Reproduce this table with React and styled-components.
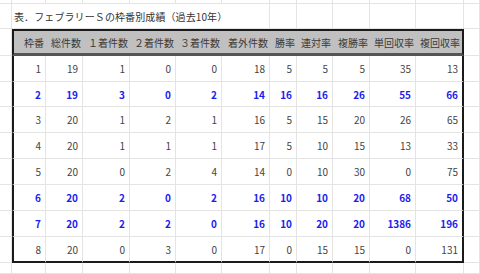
import React from 'react';
import styled, { createGlobalStyle } from 'styled-components';

const GlobalStyle = createGlobalStyle`
  body {
    margin: 0;
    background: #fff;
    font-family: "Noto Sans CJK JP", "Liberation Sans", sans-serif;
  }
`;

const COLS = [12, 34, 37, 47, 46, 46, 48, 27, 36, 37, 46, 48];
const GRID = '#e4e4e4';
const INK = '#1a1a1a';

const Sheet = styled.div`
  width: 480px;
  height: 274px;
  overflow: hidden;
  background: #fff;
`;

const SheetRow = styled.div`
  display: grid;
  grid-template-columns: ${COLS.map(c => `${c}px`).join(' ')} 1fr;
  height: ${props => props.$h}px;
`;

const Cell = styled.div`
  box-sizing: border-box;
  display: flex;
  align-items: center;
  justify-content: flex-end;
  padding-right: 4px;
  font-size: 10px;
  white-space: nowrap;
  color: ${props => (props.$blue ? '#1c1cf0' : '#444')};
  font-weight: ${props => (props.$blue ? 700 : 400)};
  border-right: 1px solid ${GRID};
  border-bottom: 1px solid ${GRID};
  ${props => props.$left && `border-left: 2px solid ${INK};`}
  ${props => props.$right && `border-right: 2px solid ${INK};`}
  ${props => props.$last && `border-bottom: 2px solid ${INK};`}
`;

const HeadCell = styled(Cell)`
  background: #c0c0c0;
  color: #3a3a3a;
  padding-right: 2px;
  border-top: 2px solid ${INK};
  border-bottom: 3px solid #555;
  border-right: ${props => (props.$right ? `2px solid ${INK}` : 'none')};
`;

const Title = styled(Cell)`
  grid-column: span 6;
  justify-content: flex-start;
  padding: 0 0 0 2px;
  color: #333;
  letter-spacing: 0.1px;
`;

const HEAD = ['枠番', '総件数', '１着件数', '２着件数', '３着件数', '着外件数', '勝率', '連対率', '複勝率', '単回収率', '複回収率'];

const DATA = [
  { blue: false, v: [1, 19, 1, 0, 0, 18, 5, 5, 5, 35, 13] },
  { blue: true, v: [2, 19, 3, 0, 2, 14, 16, 16, 26, 55, 66] },
  { blue: false, v: [3, 20, 1, 2, 1, 16, 5, 15, 20, 26, 65] },
  { blue: false, v: [4, 20, 1, 1, 1, 17, 5, 10, 15, 13, 33] },
  { blue: false, v: [5, 20, 0, 2, 4, 14, 0, 10, 30, 0, 75] },
  { blue: true, v: [6, 20, 2, 0, 2, 16, 10, 10, 20, 68, 50] },
  { blue: true, v: [7, 20, 2, 2, 0, 16, 10, 20, 20, 1386, 196] },
  { blue: false, v: [8, 20, 0, 3, 0, 17, 0, 15, 15, 0, 131] },
];

const ROW_H = [26, 25, 26, 26, 26, 26, 26, 26];

const emptyRow = n => Array.from({ length: n }, (_, i) => <Cell key={i} />);

const App = () => (
  <Sheet>
    <GlobalStyle />
    <SheetRow $h={4}>{emptyRow(13)}</SheetRow>
    <SheetRow $h={25}>
      <Cell />
      <Title>表．フェブラリーＳの枠番別成績（過去10年）</Title>
      {emptyRow(6)}
    </SheetRow>
    <SheetRow $h={27}>
      <Cell />
      {HEAD.map((h, i) => (
        <HeadCell key={h} $left={i === 0} $right={i === HEAD.length - 1}>
          {h}
        </HeadCell>
      ))}
      <Cell />
    </SheetRow>
    {DATA.map((row, r) => (
      <SheetRow key={r} $h={ROW_H[r]}>
        <Cell />
        {row.v.map((v, i) => (
          <Cell
            key={i}
            $blue={row.blue}
            $left={i === 0}
            $right={i === row.v.length - 1}
            $last={r === DATA.length - 1}
          >
            {v}
          </Cell>
        ))}
        <Cell />
      </SheetRow>
    ))}
    <SheetRow $h={11}>{emptyRow(13)}</SheetRow>
  </Sheet>
);

export default App;
